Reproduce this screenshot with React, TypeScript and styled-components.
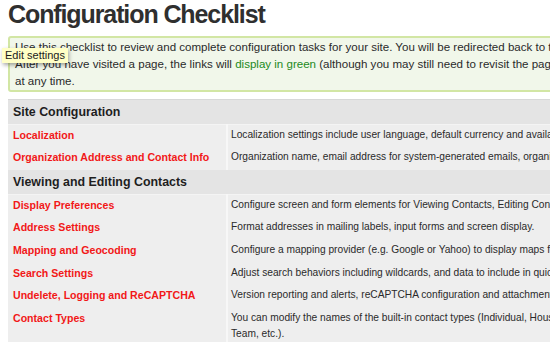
import React from "react";
import styled, { createGlobalStyle } from "styled-components";

const GlobalStyle = createGlobalStyle`
  html, body {
    margin: 0;
    padding: 0;
    background: #fff;
    overflow: hidden;
  }
  body {
    font-family: "Liberation Sans", Arial, Helvetica, sans-serif;
    color: #222;
  }
`;

const Page = styled.div`
  width: 980px;
  padding: 0 8px;
  position: relative;
`;

const Title = styled.h1`
  margin: 0;
  font-size: 25px;
  line-height: 28px;
  font-weight: bold;
  letter-spacing: -1.1px;
  color: #2f2f2f;
`;

const Notice = styled.div`
  margin-top: 8px;
  border: 2px solid #d2e6a4;
  border-radius: 3px;
  background: #f1f7ea;
  padding: 1px 4px 0 5px;
  font-size: 11.55px;
  line-height: 17px;
  color: #2a2a2a;
  white-space: nowrap;
`;

const Green = styled.span`
  color: #1c8a1c;
`;

const Tip = styled.div`
  position: absolute;
  left: 2px;
  top: 48px;
  padding: 0 3px;
  height: 15px;
  line-height: 15px;
  font-size: 11px;
  background: #ffffc6;
  color: #1a1a1a;
  box-shadow: 1px 2px 4px rgba(0, 0, 0, 0.35);
`;

const Table = styled.table`
  margin-top: 7px;
  width: 100%;
  border-collapse: collapse;
  border-top: 1px solid #d8d8d8;
  font-size: 10.6px;
`;

const SectionCell = styled.th`
  background: #e4e4e4;
  text-align: left;
  font-size: 12.4px;
  font-weight: bold;
  line-height: 16px;
  padding: 4px 5px;
  color: #1e1e1e;
  border-bottom: 1px solid #f4f4f4;
`;

const Row = styled.tr`
  background: #eeeeee;
`;

const NameCell = styled.td`
  width: 208px;
  padding: 1.6px 5px 5px;
  line-height: 16px;
  vertical-align: top;
  border-right: 2px solid #f7f7f7;
`;

const DescCell = styled.td`
  padding: 1.6px 3px 5px;
  font-size: 10.2px;
  line-height: 16px;
  vertical-align: top;
  color: #2a2a2a;
`;

const ItemLink = styled.a`
  color: #f21818;
  font-weight: bold;
  text-decoration: none;
  white-space: nowrap;
`;

type Item = { name: string; desc: React.ReactNode };

const sections: { title: string; items: Item[] }[] = [
  {
    title: "Site Configuration",
    items: [
      {
        name: "Localization",
        desc: "Localization settings include user language, default currency and available countries for address input.",
      },
      {
        name: "Organization Address and Contact Info",
        desc: "Organization name, email address for system-generated emails, organization address",
      },
    ],
  },
  {
    title: "Viewing and Editing Contacts",
    items: [
      {
        name: "Display Preferences",
        desc: "Configure screen and form elements for Viewing Contacts, Editing Contacts, Advanced Search",
      },
      {
        name: "Address Settings",
        desc: "Format addresses in mailing labels, input forms and screen display.",
      },
      {
        name: "Mapping and Geocoding",
        desc: "Configure a mapping provider (e.g. Google or Yahoo) to display maps for contact addresses",
      },
      {
        name: "Search Settings",
        desc: "Adjust search behaviors including wildcards, and data to include in quick search results",
      },
      {
        name: "Undelete, Logging and ReCAPTCHA",
        desc: "Version reporting and alerts, reCAPTCHA configuration and attachments",
      },
      {
        name: "Contact Types",
        desc: (
          <>
            You can modify the names of the built-in contact types (Individual, Household, Organization) and create sub-types (e.g. Staff,
            <br />
            Team, etc.).
          </>
        ),
      },
    ],
  },
];

export default function App() {
  return (
    <Page>
      <GlobalStyle />
      <Title>Configuration Checklist</Title>
      <Notice>
        Use this checklist to review and complete configuration tasks for your site. You will be redirected back to the checklist after saving each setting.
        <br />
        After you have visited a page, the links will <Green>display in green</Green> (although you may still need to revisit the page to update settings)
        <br />
        at any time.
      </Notice>
      <Tip>Edit settings</Tip>
      <Table>
        <tbody>
          {sections.map((s) => (
            <React.Fragment key={s.title}>
              <tr>
                <SectionCell colSpan={2}>{s.title}</SectionCell>
              </tr>
              {s.items.map((it) => (
                <Row key={it.name}>
                  <NameCell>
                    <ItemLink href="#">{it.name}</ItemLink>
                  </NameCell>
                  <DescCell>{it.desc}</DescCell>
                </Row>
              ))}
            </React.Fragment>
          ))}
        </tbody>
      </Table>
    </Page>
  );
}
